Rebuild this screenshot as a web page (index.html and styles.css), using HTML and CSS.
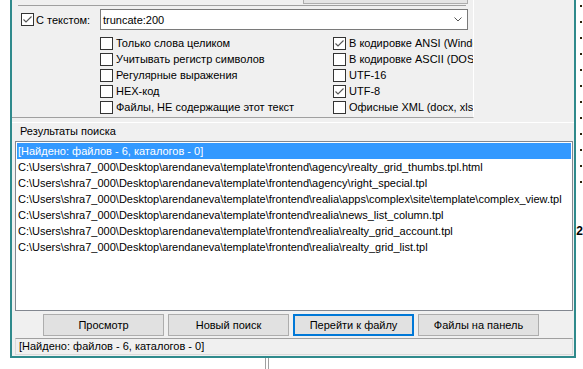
FILE: index.html
```html
<!DOCTYPE html>
<html lang="ru">

<head>
    <meta charset="UTF-8" />
    <title>Поиск файлов</title>
    <link rel="stylesheet" href="styles.css">
</head>

<body>

    <div class="desk">
        <div class="window">

            <div class="options">
                <div class="stub"></div>
                <div class="rule"></div>

                <div class="text-row">
                    <label class="chk first"><span class="box checked"></span>С текстом:</label>
                    <div class="combo">
                        <span>truncate:200</span>
                        <svg class="arrow" width="8" height="5" viewBox="0 0 8 5">
                            <polyline points="0.5,0.5 4,4 7.5,0.5" fill="none" stroke="#555" stroke-width="1" />
                        </svg>
                    </div>
                </div>

                <div class="opt-grid">
                    <label class="chk"><span class="box"></span>Только слова целиком</label>
                    <label class="chk"><span class="box checked"></span>В кодировке ANSI (Windows)</label>
                    <label class="chk"><span class="box"></span>Учитывать регистр символов</label>
                    <label class="chk"><span class="box"></span>В кодировке ASCII (DOS)</label>
                    <label class="chk"><span class="box"></span>Регулярные выражения</label>
                    <label class="chk"><span class="box"></span>UTF-16</label>
                    <label class="chk"><span class="box"></span>HEX-код</label>
                    <label class="chk"><span class="box checked"></span>UTF-8</label>
                    <label class="chk"><span class="box"></span>Файлы, НЕ содержащие этот текст</label>
                    <label class="chk"><span class="box"></span>Офисные XML (docx, xlsx)</label>
                </div>
            </div>

            <div class="results">
                <div class="results-title">Результаты поиска</div>

                <div class="listbox">
                    <div class="item selected">[Найдено: файлов - 6, каталогов - 0]</div>
                    <div class="item">C:\Users\shra7_000\Desktop\arendaneva\template\frontend\agency\realty_grid_thumbs.tpl.html</div>
                    <div class="item">C:\Users\shra7_000\Desktop\arendaneva\template\frontend\agency\right_special.tpl</div>
                    <div class="item">C:\Users\shra7_000\Desktop\arendaneva\template\frontend\realia\apps\complex\site\template\complex_view.tpl</div>
                    <div class="item">C:\Users\shra7_000\Desktop\arendaneva\template\frontend\realia\news_list_column.tpl</div>
                    <div class="item">C:\Users\shra7_000\Desktop\arendaneva\template\frontend\realia\realty_grid_account.tpl</div>
                    <div class="item">C:\Users\shra7_000\Desktop\arendaneva\template\frontend\realia\realty_grid_list.tpl</div>
                </div>

                <div class="btn-row">
                    <button class="win-btn">Просмотр</button>
                    <button class="win-btn">Новый поиск</button>
                    <button class="win-btn focused">Перейти к файлу</button>
                    <button class="win-btn">Файлы на панель</button>
                </div>

                <div class="status">[Найдено: файлов - 6, каталогов - 0]</div>
            </div>

        </div>

        <div class="side">
            <span class="dot"></span><span class="dot"></span><span class="dot"></span>
            <span class="dot"></span><span class="dot"></span><span class="dot"></span>
            <span class="dot"></span><span class="dot"></span><span class="dot"></span>
            <span class="dot"></span><span class="dot"></span><span class="dot"></span>
            <span class="num">2</span>
        </div>
    </div>

    <div class="under">
        <div class="under-frame"></div>
    </div>

</body>

</html>
```

FILE: styles.css
```css
body {
    margin: 0;
    width: 583px;
    height: 369px;
    overflow: hidden;
    background-color: #fff;
    font-family: "Liberation Sans", Arial, sans-serif;
    font-size: 11px;
    color: #000;
}

.desk {
    display: flex;
    height: 358px;
    padding-left: 10px;
}

.window {
    box-sizing: border-box;
    width: 567px;
    height: 358px;
    border: 2px solid #2f8a8c;
    border-top: none;
    background-color: #f0f0f0;
    display: flex;
    flex-direction: column;
}

/* верхняя панель с параметрами */
.options {
    box-sizing: border-box;
    width: 462px;
    height: 118px;
    border-right: 1px solid #fff;
    border-bottom: 1px solid #a0a0a0;
    overflow: hidden;
}

.stub {
    box-sizing: border-box;
    width: 165px;
    height: 4px;
    margin-left: 291px;
    border: 1px solid #adadad;
    border-top: none;
    background-color: #e5e5e5;
}

.rule {
    width: 448px;
    height: 1px;
    margin: 1px 0 0 6px;
    background-color: #a0a0a0;
}

.text-row {
    display: flex;
    align-items: center;
    height: 21px;
    margin-top: 3px;
}

.chk {
    display: flex;
    align-items: center;
    gap: 3px;
    height: 16px;
    white-space: nowrap;
}

.chk.first {
    width: 79px;
    margin-left: 9px;
    gap: 2px;
}

.box {
    box-sizing: border-box;
    flex: none;
    width: 13px;
    height: 13px;
    border: 1px solid #333;
    background-color: #fff;
}

.box.checked {
    background-image: url("data:image/svg+xml;utf8,<svg xmlns='http://www.w3.org/2000/svg' width='11' height='11'><polyline points='1.5,5.5 4,8 9.5,2.5' fill='none' stroke='%23555' stroke-width='1.1'/></svg>");
    background-repeat: no-repeat;
}

.combo {
    box-sizing: border-box;
    display: flex;
    align-items: center;
    justify-content: space-between;
    width: 368px;
    height: 21px;
    padding: 0 5px 0 2px;
    border: 1px solid #7a7a7a;
    background-color: #fff;
}

.opt-grid {
    display: grid;
    grid-template-columns: 233px 160px;
    margin: 5px 0 0 88px;
}

/* результаты */
.results {
    margin-top: 4px;
    border-top: 1px solid #fff;
    padding-left: 3px;
}

.results-title {
    height: 13px;
    line-height: 13px;
    margin: 2px 0 0 5px;
}

.listbox {
    box-sizing: border-box;
    width: 558px;
    height: 170px;
    margin-top: 3px;
    padding: 1px;
    border: 1px solid #828790;
    background-color: #fff;
    overflow: hidden;
}

.item {
    height: 16px;
    line-height: 16px;
    padding-left: 1px;
    white-space: nowrap;
}

.item.selected {
    background-color: #3399ff;
    color: #fff;
}

.btn-row {
    display: flex;
    gap: 4px;
    margin: 3px 0 0 28px;
}

.win-btn {
    box-sizing: border-box;
    width: 121px;
    height: 22px;
    padding: 0;
    border: 1px solid #adadad;
    background-color: #e1e1e1;
    font-family: inherit;
    font-size: 11px;
    color: #000;
}

.win-btn.focused {
    border: 2px solid #0078d7;
}

.status {
    box-sizing: border-box;
    width: 558px;
    height: 17px;
    line-height: 15px;
    margin-top: 2px;
    padding-left: 3px;
    border: 1px solid #dadada;
    border-top-color: #a0a0a0;
    white-space: nowrap;
}

/* то, что видно за окном */
.side {
    display: flex;
    flex-direction: column;
    padding: 5px 0 0 4px;
}

.dot {
    width: 2px;
    height: 2px;
    margin-bottom: 14px;
    background-color: #2a1e08;
}

.num {
    margin: 28px 0 0 -4px;
    font-weight: bold;
    font-size: 12px;
    line-height: 12px;
}

.under {
    height: 11px;
}

.under-frame {
    width: 2px;
    height: 11px;
    margin-left: 265px;
    border-left: 1px solid #a0a0a0;
    border-right: 1px solid #a0a0a0;
}
```
